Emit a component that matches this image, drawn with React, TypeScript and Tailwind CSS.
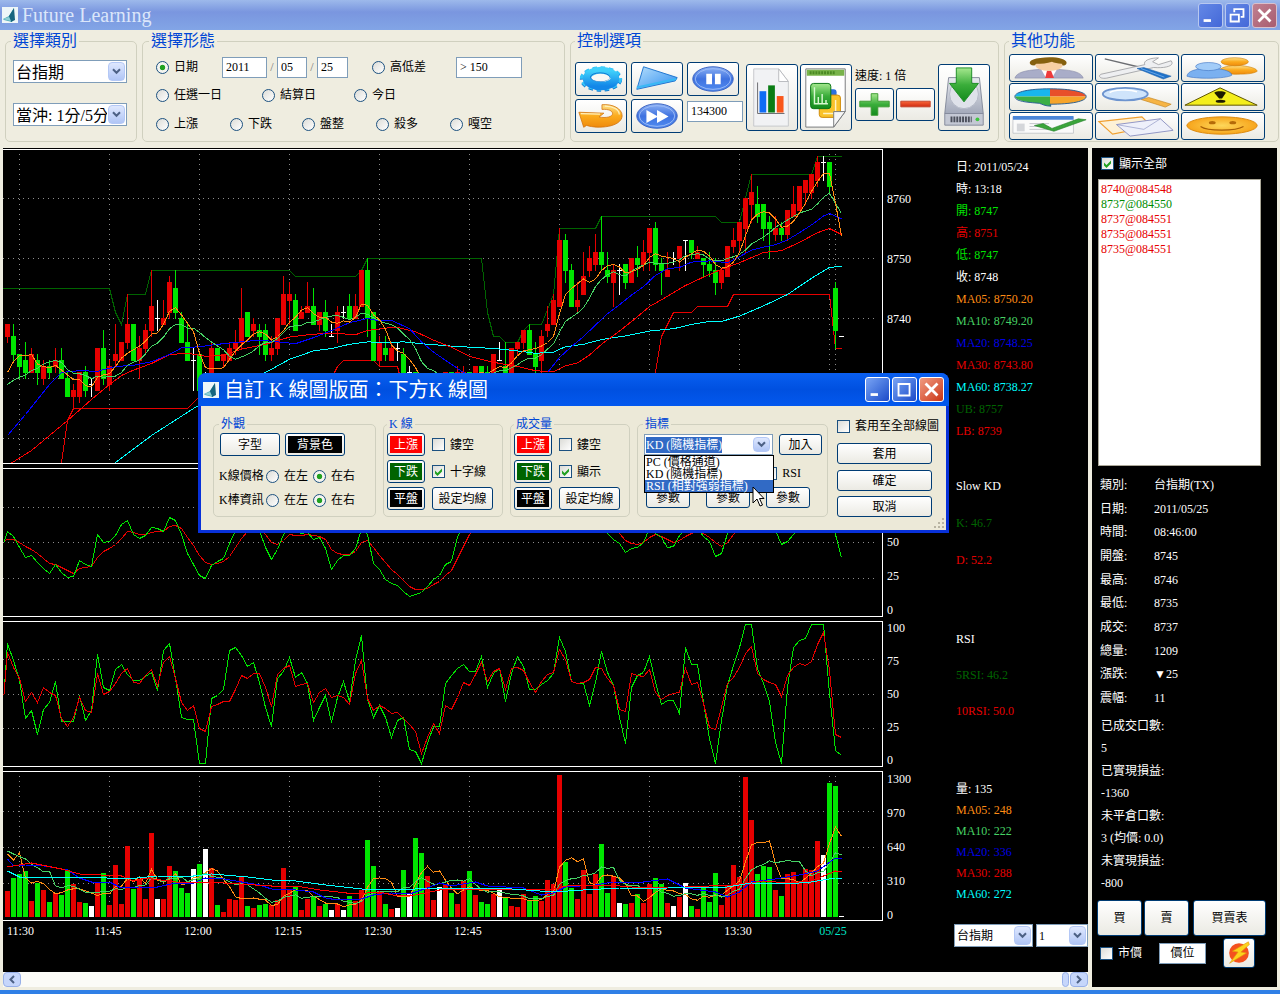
import React from 'react';

type Tone = 'R' | 'G' | 'W';
// tone, body top, body bottom, high, low (all 8700 +), volume bar height
type Candle = [Tone, number, number, number, number, number];
type Point = [number, number];

const candles: Candle[] = [
  ['R', 39, 37, 39, 36, 26], ['G', 37, 34, 39, 33, 39], ['G', 34, 32, 34, 30, 43], ['G', 33, 31, 36, 30, 46],
  ['R', 34, 31, 35, 31, 16], ['G', 33, 31, 34, 29, 34], ['R', 32, 30, 33, 29, 27], ['G', 32, 31, 33, 30, 15],
  ['R', 33, 32, 35, 31, 24], ['G', 33, 30, 35, 30, 22], ['G', 30, 27, 31, 27, 47], ['R', 28, 27, 29, 25, 33],
  ['R', 31, 27, 31, 26, 15], ['G', 31, 28, 32, 27, 14], ['W', 29, 29, 30, 27, 11], ['R', 35, 28, 35, 28, 34],
  ['G', 35, 30, 38, 29, 44], ['R', 32, 29, 33, 28, 12], ['R', 34, 33, 39, 32, 52], ['R', 36, 33, 36, 33, 13],
  ['R', 39, 36, 44, 35, 71], ['G', 39, 33, 39, 33, 28], ['R', 35, 33, 37, 30, 37], ['R', 38, 35, 39, 34, 18],
  ['R', 42, 38, 48, 37, 84], ['W', 40, 40, 43, 38, 18], ['R', 40, 39, 43, 39, 18], ['R', 46, 41, 47, 40, 51],
  ['G', 45, 41, 48, 40, 46], ['G', 40, 36, 41, 36, 29], ['G', 36, 33, 39, 33, 24], ['W', 33, 33, 35, 28, 48],
  ['G', 34, 28, 34, 27, 53], ['W', 29, 29, 31, 28, 68], ['R', 35, 30, 36, 30, 49], ['G', 35, 33, 35, 33, 12],
  ['R', 34, 33, 34, 32, 5], ['R', 35, 33, 36, 33, 18], ['R', 36, 35, 38, 34, 17], ['R', 40, 36, 45, 35, 40],
  ['G', 41, 37, 41, 37, 11], ['R', 39, 38, 40, 37, 9], ['G', 38, 37, 39, 34, 12], ['G', 38, 34, 39, 33, 13],
  ['R', 35, 34, 37, 33, 12], ['R', 40, 35, 40, 34, 17], ['R', 44, 39, 47, 39, 49], ['R', 44, 43, 46, 39, 28],
  ['G', 43, 38, 44, 38, 30], ['R', 41, 40, 42, 40, 7], ['R', 42, 41, 46, 41, 18], ['G', 42, 39, 45, 39, 21],
  ['R', 41, 39, 41, 38, 11], ['G', 41, 38, 43, 37, 13], ['W', 37, 37, 39, 37, 7], ['R', 41, 38, 42, 36, 13],
  ['W', 41, 41, 42, 40, 7], ['G', 42, 40, 44, 40, 21], ['R', 42, 40, 44, 40, 16], ['R', 48, 42, 48, 42, 27],
  ['G', 48, 40, 50, 37, 77], ['G', 41, 33, 41, 33, 51], ['R', 36, 33, 37, 32, 24], ['G', 35, 34, 37, 33, 13],
  ['R', 35, 33, 36, 33, 8], ['W', 35, 35, 36, 33, 9], ['G', 34, 31, 35, 31, 47], ['W', 31, 31, 32, 29, 23],
  ['G', 31, 27, 31, 27, 79], ['G', 28, 26, 29, 25, 64], ['R', 29, 26, 30, 26, 41], ['R', 29, 28, 30, 27, 17],
  ['W', 29, 29, 30, 28, 30], ['R', 31, 29, 31, 28, 32], ['G', 31, 30, 31, 29, 24], ['R', 31, 30, 32, 29, 13],
  ['R', 31, 30, 32, 29, 36], ['G', 31, 30, 31, 29, 46], ['R', 32, 30, 32, 30, 22], ['G', 32, 31, 32, 30, 15],
  ['G', 31, 30, 32, 30, 13], ['R', 34, 30, 34, 30, 23], ['W', 33, 33, 36, 33, 28], ['G', 32, 31, 36, 30, 19],
  ['R', 35, 31, 35, 31, 11], ['R', 36, 35, 36, 34, 10], ['R', 38, 36, 38, 35, 23], ['G', 38, 34, 39, 34, 17],
  ['G', 34, 32, 36, 31, 21], ['R', 37, 33, 38, 31, 16], ['R', 39, 38, 42, 37, 37], ['R', 43, 39, 44, 39, 33],
  ['R', 53, 42, 55, 42, 142], ['G', 53, 48, 54, 46, 55], ['G', 48, 42, 49, 42, 29], ['R', 43, 42, 46, 41, 18],
  ['R', 47, 44, 51, 44, 47], ['R', 50, 48, 52, 47, 23], ['R', 51, 49, 54, 48, 43], ['G', 51, 49, 57, 48, 73],
  ['G', 48, 47, 51, 46, 24], ['R', 48, 46, 49, 42, 41], ['W', 48, 48, 49, 44, 14], ['G', 49, 46, 49, 45, 13],
  ['R', 50, 46, 50, 46, 14], ['G', 50, 49, 52, 47, 23], ['R', 51, 49, 53, 48, 14], ['R', 55, 51, 55, 48, 33],
  ['G', 55, 49, 56, 48, 39], ['G', 49, 48, 50, 44, 33], ['R', 48, 47, 51, 47, 14], ['W', 50, 50, 51, 49, 11],
  ['R', 52, 50, 52, 48, 20], ['W', 53, 53, 53, 48, 34], ['G', 53, 51, 53, 50, 11], ['R', 51, 50, 52, 50, 8],
  ['G', 50, 49, 50, 47, 31], ['G', 49, 48, 51, 47, 15], ['G', 48, 46, 50, 44, 44], ['R', 48, 46, 48, 45, 12],
  ['R', 52, 47, 52, 47, 32], ['R', 53, 52, 55, 51, 52], ['R', 56, 53, 56, 51, 40], ['R', 60, 55, 60, 51, 140],
  ['R', 61, 59, 64, 56, 97], ['G', 59, 57, 62, 56, 43], ['G', 59, 55, 59, 53, 51], ['G', 56, 55, 57, 50, 50],
  ['R', 55, 54, 57, 53, 27], ['G', 55, 54, 56, 53, 21], ['R', 58, 54, 58, 53, 43], ['R', 59, 57, 62, 57, 45],
  ['R', 62, 58, 62, 58, 36], ['R', 63, 61, 63, 59, 48], ['R', 64, 61, 64, 60, 47], ['R', 66, 63, 67, 62, 76],
  ['W', 66, 66, 67, 63, 62], ['G', 66, 62, 66, 61, 134], ['G', 45, 38, 46, 35, 131], ['W', 37, 37, 37, 37, 1],
];

// the nine values before the first visible bar
const priorCloses = [27, 27, 27, 27, 27, 25, 27, 31, 33];
const priorVolumes = [69, 69, 69, 69, 69, 69, 8, 171, 41];

const ma20: Point[] = [[0, 20.5], [3, 24], [7, 29], [9, 31], [12, 31.3], [15, 31.2], [18, 32], [21, 32.2], [24, 32.8], [27, 34], [29, 35.1], [32, 35.3], [35, 35.7], [39, 36.1], [42, 36.4], [45, 36.1], [48, 35.8], [51, 36.8], [54, 38], [57, 39.3], [60, 40], [62, 39.6], [64, 39.7], [67, 38.3], [69, 36.1], [71, 34.4], [76, 31], [82, 29], [87, 29], [90, 31], [92, 33.5], [94, 35.3], [96, 37], [98, 38.9], [100, 40.8], [102, 42.3], [104, 43.9], [106, 45.3], [108, 47.2], [110, 48.3], [112, 48.5], [114, 49.4], [117, 49.6], [120, 49.3], [122, 50.3], [124, 51.4], [126, 51.9], [128, 52.3], [130, 53.1], [132, 54.3], [134, 55.6], [136, 57.1], [137, 57.5], [139, 56.6]];
const ma30: Point[] = [[0, 15.5], [4, 18], [7, 20.5], [10, 23], [14, 26.5], [17, 29], [19, 30.5], [21, 31.4], [24, 32.5], [27, 34], [30, 34.2], [33, 33.7], [36, 33.9], [39, 34.9], [43, 35.7], [47, 36.9], [51, 37.4], [55, 37.5], [58, 37.3], [60, 38], [63, 38.4], [65, 38.5], [68, 37.8], [71, 36.4], [74, 35.2], [77, 33.7], [81, 32.7], [85, 32], [88, 31.3], [91, 31.1], [93, 32.1], [95, 32.6], [97, 33.9], [99, 35.7], [102, 37.9], [105, 40.3], [107, 42], [110, 43.7], [113, 45.5], [116, 46.9], [119, 48.2], [122, 49.3], [126, 51], [129, 51.3], [132, 52.7], [135, 54.3], [137, 55], [139, 54]];
const ma60: Point[] = [[18, 16], [24, 20.5], [31, 25], [37, 28.5], [43, 31], [47, 33.2], [51, 34.6], [54, 35], [57, 35.7], [60, 36.1], [63, 36], [66, 36.1], [69, 35.8], [74, 35.4], [81, 35], [85, 34.6], [88, 34.2], [91, 34.4], [93, 35.3], [96, 35.7], [99, 36.5], [103, 37.1], [107, 37.9], [111, 38.3], [114, 39], [117, 39.5], [119, 39.5], [122, 40.4], [126, 42.1], [130, 44], [134, 46.7], [137, 48.5], [139, 48.7]];
const upperBand: Point[] = [[-1, 45], [17, 45], [18, 41], [19, 39], [20, 44], [23, 44], [24, 48], [47, 48], [48, 47], [58, 47], [59, 48], [60, 50], [79, 50], [80, 41], [81, 37], [82, 37], [83, 36], [85, 36], [86, 38], [87, 39], [89, 39], [90, 41.5], [91, 44], [92, 55], [98, 55], [99, 57], [118, 57], [119, 56], [122, 56], [124, 64], [134, 64], [135, 67], [139, 67]];
const lowerBand: Point[] = [[8, 10], [9, 16], [10, 23], [11, 25], [30, 25], [32, 27], [54, 30], [55, 32], [56, 33], [61, 33], [62, 32], [65, 32], [66, 28], [70, 25], [104, 26], [108, 31], [109, 37], [111, 41], [114, 41], [115, 42], [120, 42], [121, 44], [137, 44], [138, 35], [139, 35]];

const vol20: Point[] = [[0, 58], [1, 51], [3, 52], [5, 52], [8, 49], [10, 47], [12, 39], [14, 35], [17, 35], [19, 29], [22, 30], [25, 30], [28, 34], [31, 34], [33, 39], [36, 38], [39, 35], [42, 32], [44, 28], [48, 27], [51, 25], [53, 19], [55, 17], [59, 18], [61, 22], [64, 24], [67, 23], [70, 29], [72, 34], [74, 31], [78, 35], [80, 31], [86, 29], [89, 22], [91, 24], [93, 30], [98, 32], [101, 35], [106, 35], [110, 38], [113, 29], [118, 25], [120, 20], [122, 25], [124, 35], [128, 38], [132, 42], [135, 46], [138, 59], [139, 59]];
const vol30: Point[] = [[0, 50], [4, 54], [9, 48], [12, 43], [19, 41], [21, 36], [23, 39], [28, 35], [36, 34], [44, 31], [48, 31], [52, 27], [58, 23], [62, 25], [65, 21], [68, 22], [72, 27], [76, 28], [91, 28], [94, 32], [100, 32], [106, 29], [113, 30], [121, 32], [126, 36], [130, 34], [134, 36], [138, 46], [139, 45]];
const vol60: Point[] = [[0, 46], [2, 40], [13, 40], [20, 38], [25, 41], [31, 41], [34, 43], [40, 40], [44, 37], [48, 36], [53, 32], [59, 28], [66, 27], [70, 29], [78, 29], [84, 28], [91, 25], [96, 27], [102, 29], [110, 29], [120, 30], [124, 34], [130, 33], [134, 35], [138, 39], [139, 39]];

// one chart height per bar, measured from the top of the panel
const slowK = [63, 68, 79, 89, 87, 94, 100, 105, 96, 104, 109, 108, 92, 96, 98, 66, 74, 73, 67, 56, 52, 66, 70, 67, 59, 60, 63, 49, 52, 66, 85, 96, 107, 110, 97, 93, 90, 75, 62, 55, 50, 50, 62, 79, 91, 81, 66, 60, 62, 65, 64, 71, 69, 80, 101, 92, 87, 87, 80, 61, 66, 95, 101, 111, 115, 117, 123, 128, 126, 124, 118, 111, 107, 96, 93, 69, 55, 50, 48, 46, 50, 50, 48, 50, 50, 46, 44, 46, 50, 50, 46, 40, 36, 40, 46, 50, 54, 56, 58, 60, 65, 71, 75, 84, 80, 79, 74, 60, 65, 69, 79, 78, 67, 60, 58, 60, 68, 73, 88, 85, 65, 50, 40, 36, 36, 40, 48, 54, 62, 76, 73, 66, 60, 50, 40, 36, 34, 44, 66, 89];
const slowD = [71, 71, 74, 78, 81, 85, 90, 95, 96, 99, 102, 105, 100, 99, 98, 89, 83, 80, 76, 70, 63, 64, 66, 66, 64, 63, 63, 58, 57, 60, 69, 77, 87, 94, 96, 95, 93, 88, 79, 70, 63, 58, 60, 66, 74, 76, 72, 66, 67, 67, 66, 67, 68, 71, 81, 85, 86, 86, 83, 74, 72, 79, 87, 94, 101, 106, 112, 118, 121, 121, 120, 116, 113, 107, 102, 90, 78, 66, 58, 54, 52, 50, 50, 50, 50, 50, 50, 50, 50, 50, 48, 46, 44, 42, 42, 44, 48, 50, 52, 54, 56, 60, 65, 72, 75, 76, 74, 69, 66, 68, 71, 74, 72, 68, 65, 62, 65, 69, 74, 78, 74, 66, 56, 48, 44, 42, 44, 48, 52, 58, 60, 60, 58, 54, 50, 46, 42, 42, 48, 58];
const rsi5 = [22, 39, 59, 97, 89, 113, 88, 81, 60, 100, 100, 100, 74, 99, 89, 33, 66, 69, 48, 43, 53, 59, 59, 55, 51, 69, 29, 22, 57, 96, 98, 98, 142, 142, 77, 74, 68, 29, 26, 34, 45, 41, 61, 86, 105, 57, 50, 36, 56, 51, 62, 99, 86, 74, 101, 76, 60, 80, 39, 14, 78, 96, 84, 96, 116, 99, 96, 128, 130, 142, 122, 105, 105, 62, 54, 47, 43, 50, 50, 35, 66, 52, 47, 80, 52, 35, 45, 68, 68, 63, 59, 52, 16, 30, 60, 62, 62, 84, 61, 30, 51, 64, 96, 122, 66, 54, 51, 35, 61, 83, 79, 79, 92, 26, 43, 43, 81, 117, 142, 99, 64, 44, 26, 3, 3, 47, 62, 80, 121, 142, 66, 26, 19, 17, 3, 3, 3, 72, 129, 134];
const rsi10 = [31, 46, 57, 80, 71, 81, 66, 71, 74, 97, 105, 96, 76, 89, 91, 52, 73, 70, 62, 52, 47, 61, 62, 54, 48, 65, 41, 35, 57, 81, 89, 84, 107, 110, 85, 83, 80, 80, 68, 54, 57, 52, 52, 66, 85, 53, 47, 44, 65, 63, 62, 81, 71, 67, 76, 74, 76, 83, 52, 39, 77, 89, 84, 87, 92, 91, 97, 103, 110, 132, 116, 102, 112, 84, 88, 76, 61, 64, 53, 41, 60, 50, 47, 68, 47, 46, 49, 61, 71, 60, 53, 51, 28, 38, 60, 62, 61, 58, 46, 47, 57, 64, 88, 90, 52, 54, 55, 48, 71, 78, 74, 72, 71, 47, 63, 61, 82, 106, 108, 86, 62, 56, 46, 32, 25, 52, 58, 61, 63, 75, 54, 46, 42, 44, 40, 23, 11, 49, 113, 116];

const toneColor: Record<Tone, string> = { R: '#e60000', G: '#00e600', W: '#ffffff' };
const timeMarks = [2, 17, 32, 47, 62, 77, 92, 107, 122, 137, 138];

const barX = (i: number) => 4.5 + i * 6;
const priceY = (p: number) => 168.5 + (40 - p) * 6;
const volumeY = (h: number) => 145 - h;
const levelY = (v: number) => v - 0.5;

const movingAverage = (values: number[], prior: number[], span: number): Point[] => {
  const all = [...prior, ...values];
  return values.map((_, i) => {
    const end = i + prior.length + 1;
    const part = all.slice(end - span, end);
    return [i, part.reduce((sum, v) => sum + v, 0) / span];
  });
};

const closes = candles.map(([tone, top, bottom]) => (tone === 'G' ? bottom : top));
const volumes = candles.map(c => c[5]);
const indexed = (values: number[], first: number): Point[] => [[-0.6, first], ...values.map((v, i): Point => [i, v])];

const Line = ({ points, y, color }: { points: Point[]; y: (v: number) => number; color: string }) => (
  <polyline points={points.map(([i, v]) => `${barX(i)},${y(v).toFixed(1)}`).join(' ')} fill="none" stroke={color} />
);

const Grid = ({ rows, height, vertical }: { rows: number[]; height: number; vertical?: boolean }) => (
  <g stroke="#8c8c8c" strokeDasharray="1 4">
    {rows.map(y => <line key={y} x1="0" x2="872" y1={y} y2={y} />)}
    {vertical && timeMarks.map(i => <line key={i} x1={barX(i)} x2={barX(i)} y1="4" y2={height} />)}
  </g>
);

const Chart = ({ height, label, children }: { height: number; label: string; children: React.ReactNode }) => (
  <div className="min-w-0 flex-1 border-y border-r border-white">
    <svg role="img" aria-label={label} viewBox={`0 0 879 ${height}`} preserveAspectRatio="none" shapeRendering="crispEdges" className="block h-full w-full">
      {children}
    </svg>
  </div>
);

const PriceChart = () => (
  <Chart height={313} label="K 線圖">
    <Grid rows={[48.5, 108.5, 168.5, 228.5, 288.5]} height={313} vertical />
    <Line points={upperBand} y={priceY} color="#006400" />
    <Line points={lowerBand} y={priceY} color="#e60000" />
    {candles.map(([tone, top, bottom, high, low], i) => (
      <g key={i} fill={toneColor[tone]}>
        <rect x={barX(i) - 0.5} y={priceY(high) - 0.5} width="1" height={(high - low) * 6 + 1} />
        <rect x={barX(i) - 2.5} y={priceY(top) - 0.5} width="5" height={(top - bottom) * 6 + 1} />
      </g>
    ))}
    <Line points={ma60} y={priceY} color="#00ffff" />
    <Line points={ma30} y={priceY} color="#ff0000" />
    <Line points={ma20} y={priceY} color="#0000ff" />
    <Line points={movingAverage(closes, priorCloses, 10)} y={priceY} color="#46d264" />
    <Line points={movingAverage(closes, priorCloses, 5)} y={priceY} color="#ff8c14" />
  </Chart>
);

const VolumeChart = () => (
  <Chart height={148} label="成交量">
    <Grid rows={[39.5, 75.5, 111.5]} height={145} vertical />
    {candles.map(([tone, , , , , volume], i) => (
      <rect key={i} x={barX(i) - 2.5} y={volumeY(volume)} width="5" height={volume} fill={toneColor[tone]} />
    ))}
    <Line points={movingAverage(volumes, priorVolumes, 5)} y={volumeY} color="#ff8c14" />
    <Line points={movingAverage(volumes, priorVolumes, 10)} y={volumeY} color="#46d264" />
    <Line points={vol20} y={volumeY} color="#0000ff" />
    <Line points={vol30} y={volumeY} color="#ff0000" />
    <Line points={vol60} y={volumeY} color="#00ffff" />
  </Chart>
);

interface Reading {
  text: string;
  color: string;
}

const priceReadings: Reading[] = [
  { text: '日: 2011/05/24', color: 'text-white' },
  { text: '時: 13:18', color: 'text-white' },
  { text: '開: 8747', color: 'text-[#00e600]' },
  { text: '高: 8751', color: 'text-[#e60000]' },
  { text: '低: 8747', color: 'text-[#00e600]' },
  { text: '收: 8748', color: 'text-white' },
  { text: 'MA05: 8750.20', color: 'text-[#ff8c14]' },
  { text: 'MA10: 8749.20', color: 'text-[#46d264]' },
  { text: 'MA20: 8748.25', color: 'text-[#0000e6]' },
  { text: 'MA30: 8743.80', color: 'text-[#e60000]' },
  { text: 'MA60: 8738.27', color: 'text-[#00ffff]' },
  { text: 'UB: 8757', color: 'text-[#006400]' },
  { text: 'LB: 8739', color: 'text-[#e60000]' },
];

const kdReadings: Reading[] = [
  { text: 'Slow KD', color: 'text-white' },
  { text: 'K: 46.7', color: 'text-[#006400]' },
  { text: 'D: 52.2', color: 'text-[#e60000]' },
];

const rsiReadings: Reading[] = [
  { text: 'RSI', color: 'text-white' },
  { text: '5RSI: 46.2', color: 'text-[#006400]' },
  { text: '10RSI: 50.0', color: 'text-[#e60000]' },
];

const volumeReadings: Reading[] = [
  { text: '量: 135', color: 'text-white' },
  { text: 'MA05: 248', color: 'text-[#ff8c14]' },
  { text: 'MA10: 222', color: 'text-[#46d264]' },
  { text: 'MA20: 336', color: 'text-[#0000e6]' },
  { text: 'MA30: 288', color: 'text-[#e60000]' },
  { text: 'MA60: 272', color: 'text-[#00ffff]' },
];

const Readings = ({ items, className }: { items: Reading[]; className: string }) => (
  <div className={`w-[136px] shrink-0 pl-1 ${className}`}>
    {items.map(item => <p key={item.text} className={item.color}>{item.text}</p>)}
  </div>
);

const Scale = ({ items, className }: { items: string[]; className: string }) => (
  <div className={`w-[69px] shrink-0 pl-1 ${className}`}>
    {items.map(item => <p key={item}>{item}</p>)}
  </div>
);

const Chevron = () => (
  <svg viewBox="0 0 9 7" className="h-[7px] w-[9px]">
    <path d="M1 1.2 4.5 4.8 8 1.2" fill="none" stroke="#4d6185" strokeWidth="2" />
  </svg>
);

const DropArrow = () => (
  <span className="pointer-events-none absolute inset-y-0.5 right-0.5 flex w-[17px] items-center justify-center rounded-sm border border-[#b4c8f6] bg-linear-to-b from-[#dfe8fe] to-[#b0c5f5]">
    <Chevron />
  </span>
);

const Select = ({ label, options, className }: { label: string; options: string[]; className: string }) => (
  <span className="relative block">
    <select aria-label={label} className={`block h-[23px] w-full appearance-none overflow-hidden border border-[#7f9db9] bg-white pl-0.5 pr-[19px] text-black ${className}`}>
      {options.map(option => <option key={option}>{option}</option>)}
    </select>
    <DropArrow />
  </span>
);

const Radio = ({ name, label, checked, className = '' }: { name: string; label: string; checked?: boolean; className?: string }) => (
  <label className={`flex shrink-0 items-center gap-[5px] ${className}`}>
    <input
      type="radio"
      name={name}
      defaultChecked={checked}
      className="size-[13px] shrink-0 appearance-none rounded-full border border-[#1c5180] bg-linear-to-br from-[#dcdcd7] to-white checked:bg-[radial-gradient(circle,#21a121_30%,#f4f4f0_40%)]"
    />
    {label}
  </label>
);

const Check = ({ label, checked, className = '' }: { label: string; checked?: boolean; className?: string }) => (
  <label className={`flex shrink-0 items-center gap-[5px] ${className}`}>
    <span className="relative block size-[13px] shrink-0">
      <input type="checkbox" defaultChecked={checked} className="block size-[13px] appearance-none border border-[#1c5180] bg-linear-to-br from-[#dcdcd7] to-white" />
      {checked && (
        <svg viewBox="0 0 13 13" className="pointer-events-none absolute inset-0 size-[13px]">
          <path d="M3 5.5v3L5.500 11 10 6.500v-3L5.500 8z" fill="#21a121" />
        </svg>
      )}
    </span>
    {label}
  </label>
);

const TextBox = ({ label, value, className }: { label: string; value: string; className: string }) => (
  <input aria-label={label} defaultValue={value} className={`h-[21px] border border-[#7f9db9] bg-white px-[3px] ${className}`} />
);

const PushButton = ({ label, className, children }: { label?: string; className: string; children: React.ReactNode }) => (
  <button
    type="button"
    aria-label={label}
    className={`flex shrink-0 items-center justify-center rounded-[3px] border border-[#003c74] bg-linear-to-b from-white to-[#ebeae3] ${className}`}
  >
    {children}
  </button>
);

const Swatch = ({ className, children }: { className: string; children: React.ReactNode }) => (
  <span className={`flex h-full w-full items-center justify-center text-white ${className}`}>{children}</span>
);

const Art = ({ box, className = 'h-full w-full', children }: { box: string; className?: string; children: React.ReactNode }) => (
  <svg aria-hidden="true" viewBox={box} preserveAspectRatio="none" className={className}>{children}</svg>
);

const Gradients = () => (
  <svg aria-hidden="true" className="absolute size-0">
    <defs>
      <linearGradient id="sky" x1="0" y1="0" x2="0" y2="1"><stop offset="0" stopColor="#3fd0fb" /><stop offset="1" stopColor="#1387e8" /></linearGradient>
      <linearGradient id="ice" x1="0" y1="0" x2="1" y2="1"><stop offset="0" stopColor="#b5defb" /><stop offset="1" stopColor="#2d8df0" /></linearGradient>
      <linearGradient id="blue" x1="0" y1="0" x2="0" y2="1"><stop offset="0" stopColor="#8db2f4" /><stop offset="0.5" stopColor="#3f72e0" /><stop offset="1" stopColor="#4f8bf0" /></linearGradient>
      <linearGradient id="gold" x1="0" y1="0" x2="0" y2="1"><stop offset="0" stopColor="#fde08a" /><stop offset="0.5" stopColor="#fbab1d" /><stop offset="1" stopColor="#ef8a0c" /></linearGradient>
      <radialGradient id="face"><stop offset="0" stopColor="#fdd75a" /><stop offset="1" stopColor="#f7a51c" /></radialGradient>
      <linearGradient id="leaf" x1="0" y1="0" x2="0" y2="1"><stop offset="0" stopColor="#a5e88e" /><stop offset="0.5" stopColor="#3aad3a" /><stop offset="1" stopColor="#128a1c" /></linearGradient>
      <linearGradient id="steel" x1="0" y1="0" x2="0" y2="1"><stop offset="0" stopColor="#e8eaf0" /><stop offset="1" stopColor="#a3a9ba" /></linearGradient>
      <linearGradient id="fire" x1="0" y1="0" x2="0" y2="1"><stop offset="0" stopColor="#f8663a" /><stop offset="1" stopColor="#d02a12" /></linearGradient>
    </defs>
  </svg>
);

const GearArt = () => (
  <Art box="0 0 52 34">
    <g fill="none">
      <ellipse cx="26" cy="17.500" rx="20" ry="11" stroke="#1179cf" strokeWidth="4" strokeDasharray="4.500 3.700" />
      <ellipse cx="26" cy="16.500" rx="20" ry="11" stroke="#32c3f8" strokeWidth="4" strokeDasharray="4.500 3.700" />
      <ellipse cx="26" cy="16.500" rx="14.500" ry="8" stroke="url(#sky)" strokeWidth="9" />
      <ellipse cx="25" cy="15" rx="10" ry="4.500" stroke="#0f74cd" strokeWidth="1" />
    </g>
    <ellipse cx="25.500" cy="15.500" rx="9.500" ry="4" fill="#f8f8f5" />
  </Art>
);

const PlayArt = () => (
  <Art box="0 0 52 34">
    <path d="M12 4 47 15.500 45 19 5 28z" fill="url(#ice)" stroke="#1e74cf" strokeLinejoin="round" />
    <path d="M5 26 46 17" stroke="#39b8f5" strokeWidth="2" />
  </Art>
);

const PauseArt = () => (
  <Art box="0 0 52 34">
    <ellipse cx="26" cy="17" rx="21" ry="13" fill="url(#blue)" stroke="#3961c0" />
    <ellipse cx="26" cy="17" rx="18.500" ry="11" fill="none" stroke="#9dbcf7" />
    <path d="M19 11.500h6v11h-6zM28 11.500h6v11h-6z" fill="#fff" />
  </Art>
);

const ReturnArt = () => (
  <Art box="0 0 52 34">
    <path d="M3 13 8 29l3-2c12 4 36 2 37-10C48 9 38 4 27 5v5c7-.5 11 1.500 11 4.500C38 18 31 19.500 24 18l5-4z" fill="url(#gold)" stroke="#cf700b" strokeWidth=".8" strokeLinejoin="round" />
    <path d="M5 14.500 25 15M30 6.500c9 0 15 4 15 9" fill="none" stroke="#fff0bc" strokeWidth="1.200" />
  </Art>
);

const ForwardArt = () => (
  <Art box="0 0 52 34">
    <ellipse cx="26" cy="17" rx="21" ry="13" fill="url(#blue)" stroke="#3961c0" />
    <ellipse cx="26" cy="17" rx="18.500" ry="11" fill="none" stroke="#9dbcf7" />
    <path d="M15 10.500 27 17.500 15 24.500zM26 10.500 38 17.500 26 24.500z" fill="#fff" />
  </Art>
);

const ReportArt = () => (
  <Art box="0 0 52 67">
    <path d="M7 4h26l10 13v46H7z" fill="#f1f2f4" stroke="#c6c8cc" />
    <path d="M33 4v13h10z" fill="#fff" stroke="#b9bbbf" />
    <path d="M13 27h7v22h-7z" fill="#0f6cf5" />
    <path d="M22 21h7v28h-7z" fill="#0a7d14" />
    <path d="M31 32h7v17h-7z" fill="#f9571b" />
    <path d="M11 18v32h28" fill="none" stroke="#6c6c70" />
  </Art>
);

const SheetArt = () => (
  <Art box="0 0 52 67">
    <path d="M5 4h41v44L34 64H5z" fill="#fff" stroke="#77797c" />
    <path d="M6 5h39v6H6z" fill="#78b34a" />
    <path d="M9 8h26" stroke="#4b8a24" strokeWidth="3" strokeDasharray="2 1" />
    <rect x="27" y="25" width="10" height="12" rx="3" fill="#2b6fdf" />
    <rect x="19" y="31" width="22" height="23" rx="3" fill="#f9c22a" stroke="#cf8a08" />
    <path d="M36 36v14H23" fill="none" stroke="#fff3c4" strokeWidth="1.500" />
    <rect x="10" y="19" width="21" height="26" rx="3" fill="url(#leaf)" stroke="#087313" />
    <path d="M14 23v17h14M18 40v-7M22 40V30M26 40v-4" fill="none" stroke="#d7f7d0" strokeWidth="1.500" />
    <path d="M34 64V48h12z" fill="#f5f5f5" stroke="#77797c" />
  </Art>
);

const PlusArt = () => (
  <Art box="0 0 39 33">
    <path d="M16 5h7v8h12v6H23v9h-7v-9H4v-6h12z" fill="url(#leaf)" stroke="#3c9a30" />
  </Art>
);

const MinusArt = () => (
  <Art box="0 0 39 33">
    <path d="M4 13h31v6H4z" fill="url(#fire)" stroke="#c4462f" />
  </Art>
);

const DiskArt = () => (
  <Art box="0 0 52 67">
    <path d="M10 13h32l4 37H6z" fill="url(#steel)" stroke="#858b9c" />
    <ellipse cx="26" cy="30" rx="15" ry="15" fill="#dfe2ea" stroke="#b3b8c6" />
    <path d="M6 50h40v12H6z" fill="#c4c8d4" stroke="#858b9c" />
    <path d="M12 56h22" stroke="#4c505c" strokeWidth="6" strokeDasharray="2 1" />
    <circle cx="40" cy="56" r="2" fill="#3fc43f" />
    <path d="M18 3h16v16h7L26 38 11 19h7z" fill="url(#leaf)" stroke="#1d8d26" />
  </Art>
);

const PersonArt = () => (
  <Art box="0 0 84 27">
    <path d="M5 24c2-6 10-8 25-9h20c15 1 23 3 25 9z" fill="#a9adc8" stroke="#8388a6" strokeWidth=".6" />
    <path d="M32 15h16l-5 9h-6z" fill="#fff" />
    <path d="M38 16h4l3 8h-9z" fill="#ee3b3b" />
    <ellipse cx="40" cy="10.500" rx="14" ry="6" fill="#f7cfa4" />
    <path d="M25 11c-8-1-6-7 6-8 12-2 27 0 27 5 0 2-2 3-4 3l-1-2c-4 0-8-1-10-2-5 2-11 2-16 2z" fill="#86610f" />
  </Art>
);

const ToolsArt = () => (
  <Art box="0 0 84 27">
    <path d="m9 4 37 9" stroke="#6c6e72" strokeWidth="1.400" />
    <path d="M5 20 50 10c-2-4 5-7 14-7l-6 4 6 3 13-4c4 5-5 8-18 7L11 24c-7 1-9-2-6-4z" fill="#eeeff1" stroke="#96989b" strokeWidth=".8" />
    <path d="m42 14 7-1 28 9-8 3z" fill="#1f72c9" stroke="#175aa4" strokeWidth=".5" />
    <path d="m46 14 24 9" stroke="#7db4ee" strokeWidth=".8" />
  </Art>
);

const PeopleArt = () => (
  <Art box="0 0 84 27">
    <path d="M36 18c4-6 10-6 16-7h8c10 1 17 3 17 6-5 3-14 3-24 3z" fill="url(#gold)" stroke="#cd7e06" strokeWidth=".6" />
    <ellipse cx="54" cy="7" rx="14" ry="4.200" fill="url(#gold)" stroke="#cd7e06" strokeWidth=".6" />
    <path d="M5 22c1-6 10-7 16-8h14c8 1 16 3 16 7-6 4-38 4-46 1z" fill="#7ab0f0" stroke="#3a6fc0" strokeWidth=".6" />
    <ellipse cx="27" cy="12" rx="13" ry="4.200" fill="#a2ccf8" stroke="#3a6fc0" strokeWidth=".6" />
  </Art>
);

const PieArt = () => (
  <Art box="0 0 84 27">
    <path d="M41 5v8H5C6 8 20 5 41 5z" fill="#18b6ee" />
    <path d="M41 5v8h37C77 8 62 5 41 5z" fill="#e8502a" />
    <path d="M41 13h37c0 5-15 8-37 8z" fill="#f6a42a" />
    <path d="M5 13h36v7l1 3c-6 0-9-2-12-3-14-1-24-3-25-7z" fill="#3cae45" />
    <path d="M41 5C20 5 5 8 5 13s12 6 25 7c3 1 6 3 12 3l-1-2c22 0 37-3 37-8S62 5 41 5z" fill="none" stroke="#2a5f93" />
  </Art>
);

const LensArt = () => (
  <Art box="0 0 84 27">
    <path d="m46 16 8-2 23 7-6 3z" fill="#f6b444" stroke="#bf7b12" strokeWidth=".6" />
    <ellipse cx="30" cy="10.500" rx="23" ry="6.500" fill="#cfe4fb" stroke="#6d94cf" strokeWidth="2" />
    <path d="M14 9c4-3 20-4 28-1" stroke="#fff" strokeWidth="1.500" fill="none" />
  </Art>
);

const WarningArt = () => (
  <Art box="0 0 84 27">
    <path d="M39 4 3 22h74z" fill="#f4ee1c" stroke="#5c5200" strokeLinejoin="round" />
    <path d="M33 9c3-2 9-2 12 0l-4 6h-3z" fill="#1d1a00" />
    <ellipse cx="39.500" cy="18" rx="5" ry="1.600" fill="#1d1a00" />
  </Art>
);

const TaskArt = () => (
  <Art box="0 0 84 27">
    <path d="M3 4h62v17H3z" fill="#fafafa" stroke="#a9adb5" strokeWidth=".6" />
    <path d="M3 3h62v4H3z" fill="#4a86d8" />
    <path d="M7 11h8v8H7z" fill="#d4d6da" />
    <path d="M20 11h20M20 14h20M20 17h20" stroke="#c3c6cc" />
    <path d="m25 13 9-2 9 5L70 6l8 1-33 12z" fill="#3ba53b" stroke="#1f7d24" strokeWidth=".6" />
  </Art>
);

const MailArt = () => (
  <Art box="0 0 84 27">
    <path d="m3 9 44-5 10 10-40 8z" fill="#fdf1d6" stroke="#f0a030" strokeWidth="1.200" />
    <path d="m21 12 45-6 13 12-44 6z" fill="#eef0fa" stroke="#8f95c4" />
    <path d="m21 12 28 5 17-11" fill="none" stroke="#8f95c4" strokeWidth=".7" />
  </Art>
);

const SmileArt = () => (
  <Art box="0 0 84 27">
    <ellipse cx="41" cy="13" rx="36" ry="9" fill="url(#face)" stroke="#dd8a10" />
    <ellipse cx="31" cy="10" rx="3.500" ry="1.800" fill="#b46a08" />
    <ellipse cx="52" cy="10" rx="3.500" ry="1.800" fill="#b46a08" />
    <path d="M19 14c7 5 36 5 44 0" fill="none" stroke="#a55c05" strokeWidth="1.200" />
  </Art>
);

const AppMark = () => (
  <svg aria-hidden="true" viewBox="0 0 16 16" className="size-4 shrink-0">
    <path d="M0 0h16v16H0z" fill="#eef6f8" />
    <path d="M12 1 7 9l-6 3 1 1 8 2z" fill="#4aa9b4" />
    <path d="m12 1 1 12-4 2-2-6z" fill="#17657f" />
    <path d="m1 12 6-2 2 4z" fill="#8fd0d6" />
  </svg>
);

const WindowButton = ({ label, className, children }: { label: string; className: string; children: React.ReactNode }) => (
  <button type="button" aria-label={label} className={`flex size-[25px] items-center justify-center rounded-[3px] border ${className}`}>
    <svg viewBox="0 0 25 25" className="size-full" fill="none" stroke="#fff" strokeWidth="3">{children}</svg>
  </button>
);

const otherTools: Array<{ label: string; art: React.ReactNode }> = [
  { label: '使用者', art: <PersonArt /> },
  { label: '工具', art: <ToolsArt /> },
  { label: '群組', art: <PeopleArt /> },
  { label: '統計', art: <PieArt /> },
  { label: '搜尋', art: <LensArt /> },
  { label: '警示', art: <WarningArt /> },
  { label: '工作', art: <TaskArt /> },
  { label: '郵件', art: <MailArt /> },
  { label: '表情', art: <SmileArt /> },
];

const Group = ({ title, className, children }: { title: string; className: string; children: React.ReactNode }) => (
  <fieldset className={`h-[112px] rounded-[5px] border border-[#d0d0bf] ${className}`}>
    <legend className="px-0.5 text-base leading-[22px] text-[#0046d5]">{title}</legend>
    {children}
  </fieldset>
);

const Toolbar = () => (
  <div className="flex h-[118px] gap-[5px] pl-[5px] pr-px">
    <Group title="選擇類別" className="w-[132px] shrink-0 px-[5px]">
      <div className="flex w-[116px] flex-col gap-5 pl-0.5 pt-2">
        <Select label="商品" options={['台指期']} className="text-base" />
        <Select label="週期" options={['當沖: 1分/5分K']} className="text-base" />
      </div>
    </Group>

    <Group title="選擇形態" className="w-[423px] shrink-0 px-[6px]">
      <div className="pl-[7px] pt-px">
        <div className="flex h-7 items-center">
          <Radio name="shape" label="日期" checked className="w-[66px]" />
          <TextBox label="年" value="2011" className="w-[45px]" />
          <span className="w-[10px] text-center text-[#777]">/</span>
          <TextBox label="月" value="05" className="w-[30px]" />
          <span className="w-[10px] text-center text-[#777]">/</span>
          <TextBox label="日" value="25" className="mr-6 w-[31px]" />
          <Radio name="shape" label="高低差" className="w-[84px]" />
          <TextBox label="高低差條件" value="> 150" className="w-[66px]" />
        </div>
        <div className="flex h-7 items-center">
          <Radio name="shape" label="任選一日" className="w-[106px]" />
          <Radio name="shape" label="結算日" className="w-[92px]" />
          <Radio name="shape" label="今日" />
        </div>
        <div className="flex h-[30px] items-center">
          <Radio name="shape" label="上漲" className="w-[74px]" />
          <Radio name="shape" label="下跌" className="w-[72px]" />
          <Radio name="shape" label="盤整" className="w-[74px]" />
          <Radio name="shape" label="殺多" className="w-[74px]" />
          <Radio name="shape" label="嘎空" />
        </div>
      </div>
    </Group>

    <Group title="控制選項" className="min-w-0 flex-1 px-1">
      <div className="flex items-start gap-[3px] pt-[10px]">
        <div className="grid grid-cols-[52px_52px_56px] gap-x-1 gap-y-[3px]">
          <PushButton label="設定" className="h-[34px]"><GearArt /></PushButton>
          <PushButton label="播放" className="h-[34px]"><PlayArt /></PushButton>
          <PushButton label="暫停" className="h-[34px] w-[52px]"><PauseArt /></PushButton>
          <PushButton label="返回" className="h-[34px]"><ReturnArt /></PushButton>
          <PushButton label="快轉" className="h-[34px]"><ForwardArt /></PushButton>
          <TextBox label="時間" value="134300" className="mt-0.5 w-full" />
        </div>
        <div className="flex gap-0.5 pt-0.5">
          <PushButton label="報表" className="h-[67px] w-[52px]"><ReportArt /></PushButton>
          <PushButton label="試算表" className="h-[67px] w-[52px]"><SheetArt /></PushButton>
        </div>
        <div className="w-20">
          <p className="mb-0.5 h-6 leading-7">速度: 1 倍</p>
          <div className="flex gap-0.5">
            <PushButton label="加速" className="h-[33px] w-[39px]"><PlusArt /></PushButton>
            <PushButton label="減速" className="h-[33px] w-[39px]"><MinusArt /></PushButton>
          </div>
        </div>
        <PushButton label="儲存" className="mt-0.5 h-[67px] w-[52px]"><DiskArt /></PushButton>
      </div>
    </Group>

    <Group title="其他功能" className="w-[275px] shrink-0 px-1">
      <div className="grid w-fit grid-cols-3 gap-x-0.5 gap-y-px pt-0.5">
        {otherTools.map(tool => (
          <PushButton key={tool.label} label={tool.label} className="h-7 w-[84px]">{tool.art}</PushButton>
        ))}
      </div>
    </Group>
  </div>
);

const timeLabels = ['11:45', '12:00', '12:15', '12:30', '12:45', '13:00', '13:15', '13:30'];

const ChartArea = () => (
  <main className="min-w-0 flex-1">
    <div className="bg-black pt-px text-white">
      <div className="mb-1 flex h-[315px]">
        <PriceChart />
        <Scale items={['8760', '8750', '8740']} className="pt-5 leading-[60px]" />
        <Readings items={priceReadings} className="pt-[7px] leading-[22px]" />
      </div>
      <div className="mb-1 flex h-[149px]">
        <Chart height={147} label="Slow KD">
          <Grid rows={[38.5, 73.5, 109.5]} height={147} />
          <Line points={indexed(slowD, 72)} y={levelY} color="#e60000" />
          <Line points={indexed(slowK, 74)} y={levelY} color="#00e600" />
        </Chart>
        <Scale items={['50', '25', '0']} className="pt-[57px] leading-[34px]" />
        <Readings items={kdReadings} className="leading-[37px]" />
      </div>
      <div className="mb-1 flex h-[146px]">
        <Chart height={144} label="RSI">
          <Grid rows={[37.5, 72.5, 106.5]} height={144} />
          <Line points={indexed(rsi5, 74)} y={levelY} color="#00e600" />
          <Line points={indexed(rsi10, 74)} y={levelY} color="#e60000" />
        </Chart>
        <Scale items={['100', '75', '50', '25', '0']} className="-mt-[9px] leading-[33px]" />
        <Readings items={rsiReadings} className="leading-9" />
      </div>
      <div className="flex h-[150px]">
        <VolumeChart />
        <Scale items={['1300', '970', '640', '310', '0']} className="-mt-[9px] leading-[34px]" />
        <Readings items={volumeReadings} className="pt-2 leading-[21px]" />
      </div>
      <div className="flex h-[51px]">
        <div className="flex min-w-0 flex-1 text-center leading-5">
          <span className="flex-[60] indent-1 text-left">11:30</span>
          {timeLabels.map(time => <span key={time} className="flex-[90]">{time}</span>)}
          <span className="flex-[100] text-[#00e6c8]">05/25</span>
        </div>
        <div className="ml-[69px] flex w-[136px] shrink-0 gap-[3px] pl-0.5 pt-[3px]">
          <div className="w-[79px]"><Select label="圖表商品" options={['台指期']} className="" /></div>
          <div className="flex-1"><Select label="分鐘" options={['1']} className="" /></div>
        </div>
      </div>
    </div>
    <div className="flex h-[15px] justify-between bg-[#fbfbf7]">
      <button type="button" aria-label="向左捲動" className="flex w-[18px] items-center justify-center rounded-sm border border-[#98b0e8] bg-[#c6d6fb]">
        <svg viewBox="0 0 8 9" className="h-[9px] w-2"><path d="M6 1 2.500 4.500 6 8" fill="none" stroke="#4d6185" strokeWidth="2" /></svg>
      </button>
      <div className="flex gap-px">
        <span className="w-[7px] rounded-sm border border-[#98b0e8] bg-[#c6d6fb]" />
        <button type="button" aria-label="向右捲動" className="flex w-[18px] items-center justify-center rounded-sm border border-[#98b0e8] bg-[#c6d6fb]">
          <svg viewBox="0 0 8 9" className="h-[9px] w-2"><path d="M2 1 5.500 4.500 2 8" fill="none" stroke="#4d6185" strokeWidth="2" /></svg>
        </button>
      </div>
    </div>
  </main>
);

const ticks = [
  { text: '8740@084548', color: 'text-[#e60000]' },
  { text: '8737@084550', color: 'text-[#008c00]' },
  { text: '8737@084551', color: 'text-[#e60000]' },
  { text: '8735@084551', color: 'text-[#e60000]' },
  { text: '8735@084551', color: 'text-[#e60000]' },
];

const quote: Array<[string, string]> = [
  ['類別:', '台指期(TX)'],
  ['日期:', '2011/05/25'],
  ['時間:', '08:46:00'],
  ['開盤:', '8745'],
  ['最高:', '8746'],
  ['最低:', '8735'],
  ['成交:', '8737'],
  ['總量:', '1209'],
  ['漲跌:', '▼25'],
  ['震幅:', '11'],
];

const account = ['已成交口數:', '5', '已實現損益:', '-1360', '未平倉口數:', '3 (均價: 0.0)', '未實現損益:', '-800'];

const SidePanel = () => (
  <aside className="w-[185px] shrink-0 bg-black pl-[6px] text-white">
    <Check label="顯示全部" checked className="h-[31px] pl-[3px]" />
    <ul className="h-[287px] w-[163px] border border-[#aca899] bg-white pl-0.5 pt-0.5 leading-[15px]">
      {ticks.map((tick, i) => <li key={i} className={tick.color}>{tick.text}</li>)}
    </ul>
    <dl className="mt-2 flex h-[235px] flex-col justify-between pl-0.5 leading-[22px]">
      {quote.map(([name, value]) => (
        <div key={name} className="flex">
          <dt className="w-[54px]">{name}</dt>
          <dd>{value}</dd>
        </div>
      ))}
    </dl>
    <div className="my-[6px] flex h-[179px] flex-col justify-between pl-[3px] leading-[22px]">
      {account.map(line => <p key={line}>{line}</p>)}
    </div>
    <div className="-ml-px flex text-black">
      <PushButton className="mr-0.5 h-9 w-[45px]">買</PushButton>
      <PushButton className="mr-1 h-9 w-[45px]">賣</PushButton>
      <PushButton className="h-9 w-[73px]">買賣表</PushButton>
    </div>
    <div className="-ml-px flex h-[34px] items-center">
      <Check label="市價" className="w-[62px] pl-[3px]" />
      <button type="button" className="mr-[17px] h-[21px] w-[47px] border border-[#7f9db9] bg-white text-black">價位</button>
      <PushButton label="快速下單" className="h-[30px] w-8">
        <Art box="0 0 32 30">
          <circle cx="16" cy="15" r="10.500" fill="#f4511e" />
          <path d="M26 3 9 13l6 1L6 26l18-11-6-1 9-8z" fill="#fcd21c" stroke="#e39a0c" strokeWidth=".7" />
        </Art>
      </PushButton>
    </div>
  </aside>
);

const DialogGroup = ({ title, className, children }: { title: string; className: string; children: React.ReactNode }) => (
  <fieldset className={`h-[101px] shrink-0 rounded-[5px] border border-[#d0d0bf] ${className}`}>
    <legend className="px-0.5 leading-4 text-[#0046d5]">{title}</legend>
    <div className="pt-px">{children}</div>
  </fieldset>
);

const toneButtons = [
  { label: '上漲', fill: 'bg-[#ff0000]' },
  { label: '下跌', fill: 'bg-[#006400]' },
  { label: '平盤', fill: 'bg-black' },
];

const TonePicker = ({ title, hollow, second }: { title: string; hollow: string; second: string }) => (
  <DialogGroup title={title} className="w-[120px] px-[3px]">
    <div className="flex gap-[7px]">
      <div className="flex flex-col gap-1">
        {toneButtons.map(tone => (
          <PushButton key={tone.label} className="h-[23px] w-[38px] p-0.5"><Swatch className={tone.fill}>{tone.label}</Swatch></PushButton>
        ))}
      </div>
      <div className="flex flex-col gap-1">
        <Check label={hollow} className="h-[23px]" />
        <Check label={second} checked className="h-[23px]" />
        <PushButton className="h-[23px] w-[61px]">設定均線</PushButton>
      </div>
    </div>
  </DialogGroup>
);

const IndicatorBox = () => (
  <DialogGroup title="指標" className="w-[189px] px-[5px]">
    <div className="relative flex items-center gap-[6px] pl-px pt-px">
      <button type="button" role="combobox" aria-label="指標" aria-expanded="true" aria-controls="indicator-list" className="relative h-[21px] w-[129px] border border-[#7f9db9] bg-white px-px text-left">
        <span className="block w-fit bg-[#316ac5] leading-4 text-white">KD (隨機指標)</span>
        <DropArrow />
      </button>
      <PushButton className="h-[21px] w-[43px]">加入</PushButton>
      <ul id="indicator-list" role="listbox" className="absolute left-px top-[22px] z-10 w-[130px] border border-black bg-white leading-3 text-black">
        <li role="option" aria-selected="false" className="px-px">PC (價格通道)</li>
        <li role="option" aria-selected="false" className="px-px">KD (隨機指標)</li>
        <li role="option" aria-selected="true" className="bg-[#316ac5] px-px text-white">RSI (相對強弱指標)</li>
      </ul>
    </div>
    <div className="flex h-8 items-center justify-end pr-[21px] pt-1">
      <Check label="RSI" checked />
    </div>
    <div className="flex gap-4 pl-[3px]">
      <PushButton className="h-[21px] w-11">參數</PushButton>
      <PushButton className="h-[21px] w-11">參數</PushButton>
      <PushButton className="h-[21px] w-11">參數</PushButton>
    </div>
  </DialogGroup>
);

const LayoutDialog = () => (
  <section role="dialog" aria-label="自訂 K 線圖版面" className="absolute left-[198px] top-[373px] w-[751px] rounded-t-lg bg-[#0831d9] px-[3px] pb-[3px] text-black">
    <header className="-mx-[3px] flex h-[33px] items-center rounded-t-lg bg-linear-to-b from-[#0a5ff0] via-[#0050e0] to-[#0358ee] pl-[5px] pr-[5px]">
      <AppMark />
      <h2 className="min-w-0 flex-1 pl-[5px] text-xl leading-8 text-white">自訂 K 線圖版面：下方K 線圖</h2>
      <div className="flex gap-0.5">
        <WindowButton label="最小化" className="border-white bg-linear-to-br from-[#7aa4f4] to-[#1c48c8]"><path d="M5 18h8" /></WindowButton>
        <WindowButton label="最大化" className="border-white bg-linear-to-br from-[#7aa4f4] to-[#1c48c8]"><path d="M5 6.500h14M6 7v12h12V7" strokeWidth="2" /></WindowButton>
        <WindowButton label="關閉" className="border-white bg-linear-to-br from-[#f09a80] to-[#c9300c]"><path d="m6 6 13 13M19 6 6 19" /></WindowButton>
      </div>
    </header>
    <div className="relative flex h-[124px] gap-[7px] bg-[#ece9d8] pl-3 pt-[10px]">
      <DialogGroup title="外觀" className="w-[163px] px-[5px]">
        <div className="mb-2 flex gap-[5px] pl-px">
          <PushButton className="h-[23px] w-[60px]">字型</PushButton>
          <PushButton className="h-[23px] w-[60px] p-0.5"><Swatch className="bg-black">背景色</Swatch></PushButton>
        </div>
        {['K線價格', 'K棒資訊'].map(name => (
          <div key={name} role="radiogroup" aria-label={name} className="flex h-6 items-center">
            <span className="w-[47px] whitespace-nowrap">{name}</span>
            <Radio name={name} label="在左" className="w-[47px]" />
            <Radio name={name} label="在右" checked />
          </div>
        ))}
      </DialogGroup>
      <TonePicker title="K 線" hollow="鏤空" second="十字線" />
      <TonePicker title="成交量" hollow="鏤空" second="顯示" />
      <IndicatorBox />
      <div className="ml-0.5 flex flex-col">
        <Check label="套用至全部線圖" className="h-5" />
        <PushButton className="mt-[7px] h-[21px] w-[95px]">套用</PushButton>
        <PushButton className="mt-[6px] h-[21px] w-[95px]">確定</PushButton>
        <PushButton className="mt-[5px] h-[21px] w-[95px]">取消</PushButton>
      </div>
      <svg aria-hidden="true" viewBox="0 0 12 12" className="absolute bottom-0 right-0 size-3" fill="#b8b4a3">
        <path d="M8 0h2v2H8zM8 4h2v2H8zM8 8h2v2H8zM4 4h2v2H4zM4 8h2v2H4zM0 8h2v2H0z" />
      </svg>
      <svg aria-hidden="true" viewBox="0 0 13 21" className="absolute left-[551px] top-20 z-20 h-[21px] w-[13px]">
        <path d="M1 1v16l4-4 3 7 2.500-1-3-6.500H12z" fill="#fff" stroke="#000" />
      </svg>
    </div>
  </section>
);

export default function App() {
  return (
    <div className="relative min-h-screen bg-[#efede0] font-['Liberation_Serif','Noto_Sans_CJK_TC',serif] text-xs text-black">
      <Gradients />
      <header className="flex h-[30px] items-center bg-linear-to-b from-[#9db9eb] via-[#7a96df] via-40% to-[#82a5e6] pl-0.5 pr-[3px]">
        <AppMark />
        <h1 className="min-w-0 flex-1 pl-1 text-xl leading-7 text-[#dbe6fa]">Future Learning</h1>
        <div className="flex gap-0.5">
          <WindowButton label="最小化" className="border-[#b8c8f0] bg-linear-to-br from-[#6488e6] to-[#4468d8]"><path d="M5 18h8" /></WindowButton>
          <WindowButton label="還原" className="border-[#b8c8f0] bg-linear-to-br from-[#6488e6] to-[#4468d8]">
            <path d="M9 9V5.500h10V14h-3M4 11.500h11M5 11v8h9v-8" strokeWidth="2" />
          </WindowButton>
          <WindowButton label="關閉" className="border-[#d8c0cc] bg-linear-to-br from-[#c08090] to-[#a85c70]"><path d="m6 6 13 13M19 6 6 19" /></WindowButton>
        </div>
      </header>
      <Toolbar />
      <div className="flex gap-1 px-[3px]">
        <ChartArea />
        <SidePanel />
      </div>
      <footer className="mt-[3px] h-1 bg-[#2f7fe6]" />
      <LayoutDialog />
    </div>
  );
}
